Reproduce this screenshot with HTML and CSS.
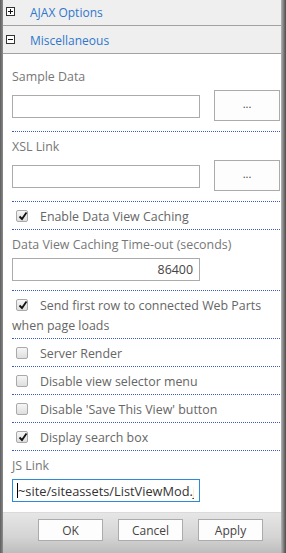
FILE: index.html
```html
<!DOCTYPE html>
<html lang="en">
<head>
  <meta charset="UTF-8" />
  <meta name="viewport" content="width=device-width, initial-scale=1.0"/>
  <title>Tool Pane</title>
  <link rel="stylesheet" href="styles.css">
</head>
<body>
  <div class="pane">
    <!-- Collapsible group headers -->
    <div class="group-head scrolled">
      <svg class="toggle" width="9" height="9" viewBox="0 0 9 9"><rect x="0.5" y="0.5" width="8" height="8" fill="#fff" stroke="#333"/><path d="M2 4.5H7M4.5 2V7" stroke="#111" stroke-width="1"/></svg>
      <span>AJAX Options</span>
    </div>
    <div class="group-head">
      <svg class="toggle" width="9" height="9" viewBox="0 0 9 9"><rect x="0.5" y="0.5" width="8" height="8" fill="#fff" stroke="#333"/><path d="M2 4.5H7" stroke="#111" stroke-width="1"/></svg>
      <span>Miscellaneous</span>
    </div>

    <div class="group-body">
      <div class="field first">
        <div class="label">Sample Data</div>
        <div class="picker">
          <input class="textbox" type="text">
          <button class="browse">...</button>
        </div>
      </div>

      <div class="field">
        <div class="label">XSL Link</div>
        <div class="picker">
          <input class="textbox" type="text">
          <button class="browse">...</button>
        </div>
      </div>

      <div class="check-row">
        <span class="check on"><svg width="10" height="10" viewBox="0 0 10 10"><path d="M1.5 5.5L4 8L8.5 1.5" fill="none" stroke="#111" stroke-width="1.8"/></svg></span>Enable Data View Caching
      </div>

      <div class="field">
        <div class="label">Data View Caching Time-out (seconds)</div>
        <input class="textbox number" type="text" value="86400">
      </div>

      <div class="check-row">
        <span class="check on"><svg width="10" height="10" viewBox="0 0 10 10"><path d="M1.5 5.5L4 8L8.5 1.5" fill="none" stroke="#111" stroke-width="1.8"/></svg></span>Send first row to connected Web Parts when page loads
      </div>
      <div class="check-row">
        <span class="check"></span>Server Render
      </div>
      <div class="check-row">
        <span class="check"></span>Disable view selector menu
      </div>
      <div class="check-row">
        <span class="check"></span>Disable 'Save This View' button
      </div>
      <div class="check-row">
        <span class="check on"><svg width="10" height="10" viewBox="0 0 10 10"><path d="M1.5 5.5L4 8L8.5 1.5" fill="none" stroke="#111" stroke-width="1.8"/></svg></span>Display search box
      </div>

      <div class="field last">
        <div class="label">JS Link</div>
        <div class="focused">
          <input class="textbox active" type="text" value="~site/siteassets/ListViewMod.js">
        </div>
      </div>
    </div>

    <div class="footer">
      <button class="action">OK</button>
      <button class="action">Cancel</button>
      <button class="action">Apply</button>
    </div>
  </div>
</body>
</html>
```

FILE: styles.css
```css
html, body {
  height: 100%;
}
body {
  margin: 0;
  font-family: 'Open Sans', 'Liberation Sans', sans-serif;
  font-size: 12.4px;
  color: #666;
  background: linear-gradient(to right, #5e5e5e 0, #8c8c8c 3px, #fff 3px, #fff calc(100% - 5px), #b5b5b5 calc(100% - 5px), #4a4a4a 100%);
  overflow: hidden;
}
.pane {
  margin: 0 5px 0 3px;
  height: 100%;
  display: flex;
  flex-direction: column;
  background: #fff;
}

/* group headers */
.group-head {
  height: 27px;
  flex: none;
  display: flex;
  align-items: center;
  padding-left: 3px;
  background: #efefef;
  border-bottom: 1px solid #a2a2a2;
  color: #2f77cc;
  font-size: 12px;
}
.group-head span {
  padding-top: 2px;
}
.group-head.scrolled {
  margin-top: -2px;
}
.group-head .toggle {
  margin-right: 15px;
  flex: none;
}

/* fields */
.group-body {
  flex: 1;
  padding: 0 1px 0 9px;
}
.field {
  padding-top: 5px;
  padding-bottom: 9px;
  border-bottom: 1px dotted #3c58c4;
}
.field.first {
  padding-top: 13px;
}
.field.last {
  border-bottom: none;
  padding-bottom: 10px;
}
.label {
  line-height: 20px;
  color: #777;
  margin-bottom: 3px;
}
.picker {
  display: flex;
  align-items: center;
  gap: 14px;
  margin-bottom: 1px;
}
.picker .textbox {
  margin-top: 1px;
}
.textbox {
  box-sizing: border-box;
  width: 188px;
  height: 23px;
  margin: 0;
  padding: 0 5px;
  border: 1px solid #ababab;
  background: #fff;
  font-family: inherit;
  font-size: 12.4px;
  color: #444;
  outline: none;
}
.textbox.number {
  text-align: right;
  padding-right: 6px;
}
.textbox.active {
  border-color: #2d8ad6;
  color: #333;
  font-size: 12.8px;
}
.focused {
  position: relative;
  width: 188px;
}
.focused::after {
  content: '';
  position: absolute;
  left: 5px;
  top: 4px;
  width: 1px;
  height: 15px;
  background: #000;
}
.browse {
  box-sizing: border-box;
  width: 66px;
  height: 31px;
  margin: 0;
  padding: 0 0 4px;
  border: 1px solid #ababab;
  background: #fdfdfd;
  color: #444;
  font-family: inherit;
  font-size: 11px;
}

/* checkbox rows */
.check-row {
  padding: 5px 0 2px;
  line-height: 20px;
  border-bottom: 1px dotted #3c58c4;
  color: #666;
}
.check {
  display: inline-block;
  box-sizing: border-box;
  width: 12px;
  height: 12px;
  margin: 0 12px 0 4px;
  vertical-align: -1px;
  border: 1px solid #a9a9a9;
  border-radius: 2px;
  background: linear-gradient(#f6f6f6, #dedede);
  position: relative;
}
.check svg {
  position: absolute;
  left: 1px;
  top: 0;
}

/* footer buttons */
.footer {
  flex: none;
  height: 41px;
  box-sizing: border-box;
  padding: 6px 18px 0 0;
  display: flex;
  justify-content: flex-end;
  gap: 15px;
  background: linear-gradient(#e6e6e6, #d4d4d4 60%, #bdbdbd);
  border-top: 1px solid #dadada;
}
.action {
  box-sizing: border-box;
  width: 65px;
  height: 22px;
  margin: 0;
  padding: 0;
  border: 1px solid #ababab;
  background: #fdfdfd;
  color: #444;
  font-family: inherit;
  font-size: 12px;
}
```
